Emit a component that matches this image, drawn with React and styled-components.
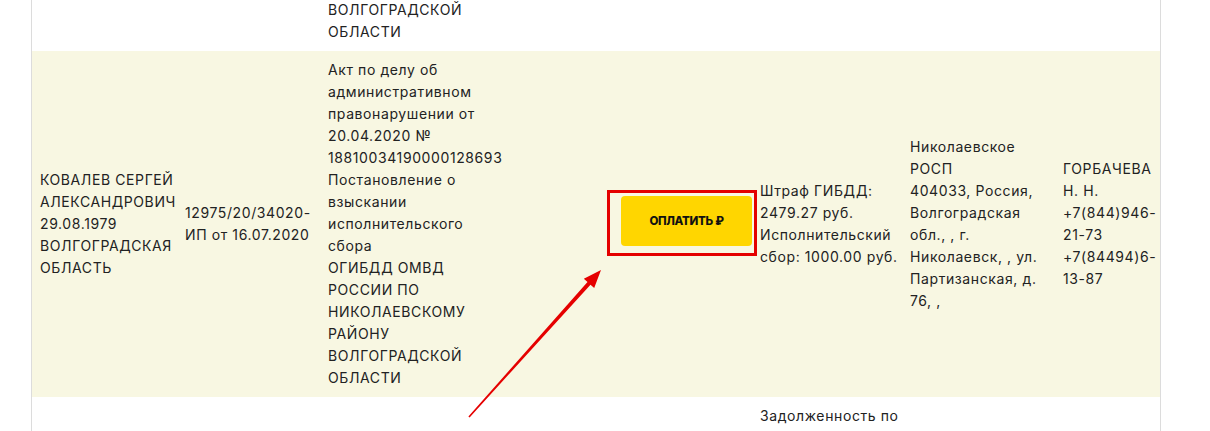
import React from "react";
import styled, { createGlobalStyle } from "styled-components";

const Global = createGlobalStyle`
  html, body { margin: 0; padding: 0; background: #fff; overflow: hidden; }
  body { font-family: Inter, "Noto Sans", sans-serif; color: #222; }
`;

const Page = styled.div`
  position: relative;
  width: 1210px;
  height: 431px;
  overflow: hidden;
`;

const Table = styled.div`
  margin: -1px 0 0 31px;
  width: 1128px;
  min-height: 450px;
  border-left: 1px solid #dcdcdc;
  border-right: 1px solid #dcdcdc;
`;

const Row = styled.div`
  display: grid;
  grid-template-columns: 145px 143px 200px 232px 150px 153px 105px;
  background: ${(p) => (p.$highlight ? "#f8f7e2" : "#fff")};
`;

const Cell = styled.div`
  display: flex;
  align-items: ${(p) => (p.$start ? "flex-start" : "center")};
  justify-content: ${(p) => (p.$end ? "flex-end" : "flex-start")};
  padding: ${(p) => (p.$top ? "0" : "8px")} 0 8px 8px;
  font-size: 14px;
  line-height: 22px;
  letter-spacing: 0.6px;
  white-space: nowrap;
`;

const Lines = styled.div``;

const PayWrap = styled.div`
  position: relative;
  margin-bottom: 6px;
`;

const PayButton = styled.button`
  display: block;
  width: 131px;
  height: 50px;
  padding: 0;
  border: none;
  border-radius: 4px;
  background: #ffd600;
  color: #111;
  font-family: Inter, "DejaVu Sans", sans-serif;
  font-weight: 800;
  font-size: 11.5px;
  letter-spacing: -0.3px;
  cursor: pointer;
`;

const Highlight = styled.div`
  position: absolute;
  top: -6px;
  right: -5px;
  bottom: -10px;
  left: -14px;
  border: 3px solid #e40000;
  pointer-events: none;
`;

const Arrow = styled.svg`
  position: absolute;
  top: 0;
  left: 0;
  pointer-events: none;
`;

const L = ({ items }) => (
  <Lines>
    {items.map((t, i) => (
      <React.Fragment key={i}>
        {t}
        {i < items.length - 1 && <br />}
      </React.Fragment>
    ))}
  </Lines>
);

export default function App() {
  return (
    <Page>
      <Global />
      <Table>
        <Row>
          <Cell $top />
          <Cell $top />
          <Cell $top>
            <L items={["ВОЛГОГРАДСКОЙ", "ОБЛАСТИ"]} />
          </Cell>
          <Cell $top />
          <Cell $top />
          <Cell $top />
          <Cell $top />
        </Row>
        <Row $highlight>
          <Cell>
            <L items={["КОВАЛЕВ СЕРГЕЙ", "АЛЕКСАНДРОВИЧ", "29.08.1979", "ВОЛГОГРАДСКАЯ", "ОБЛАСТЬ"]} />
          </Cell>
          <Cell>
            <L items={["12975/20/34020-", "ИП от 16.07.2020"]} />
          </Cell>
          <Cell>
            <L
              items={[
                "Акт по делу об",
                "административном",
                "правонарушении от",
                "20.04.2020 №",
                "18810034190000128693",
                "Постановление о",
                "взыскании",
                "исполнительского",
                "сбора",
                "ОГИБДД ОМВД",
                "РОССИИ ПО",
                "НИКОЛАЕВСКОМУ",
                "РАЙОНУ",
                "ВОЛГОГРАДСКОЙ",
                "ОБЛАСТИ",
              ]}
            />
          </Cell>
          <Cell $end>
            <PayWrap>
              <PayButton>ОПЛАТИТЬ ₽</PayButton>
              <Highlight />
            </PayWrap>
          </Cell>
          <Cell>
            <L items={["Штраф ГИБДД:", "2479.27 руб.", "Исполнительский", "сбор: 1000.00 руб."]} />
          </Cell>
          <Cell>
            <L
              items={[
                "Николаевское",
                "РОСП",
                "404033, Россия,",
                "Волгоградская",
                "обл., , г.",
                "Николаевск, , ул.",
                "Партизанская, д.",
                "76, ,",
              ]}
            />
          </Cell>
          <Cell>
            <L items={["ГОРБАЧЕВА", "Н. Н.", "+7(844)946-", "21-73", "+7(84494)6-", "13-87"]} />
          </Cell>
        </Row>
        <Row>
          <Cell />
          <Cell />
          <Cell />
          <Cell />
          <Cell $start>
            <L items={["Задолженность по"]} />
          </Cell>
          <Cell />
          <Cell />
        </Row>
      </Table>
      <Arrow width="1210" height="431" viewBox="0 0 1210 431">
        <polygon
          fill="#e50000"
          points="468.4,416.5 587.5,282.1 583.8,278.7 601,270 594.2,288.1 590.5,284.7 469.6,417.5"
        />
      </Arrow>
    </Page>
  );
}
